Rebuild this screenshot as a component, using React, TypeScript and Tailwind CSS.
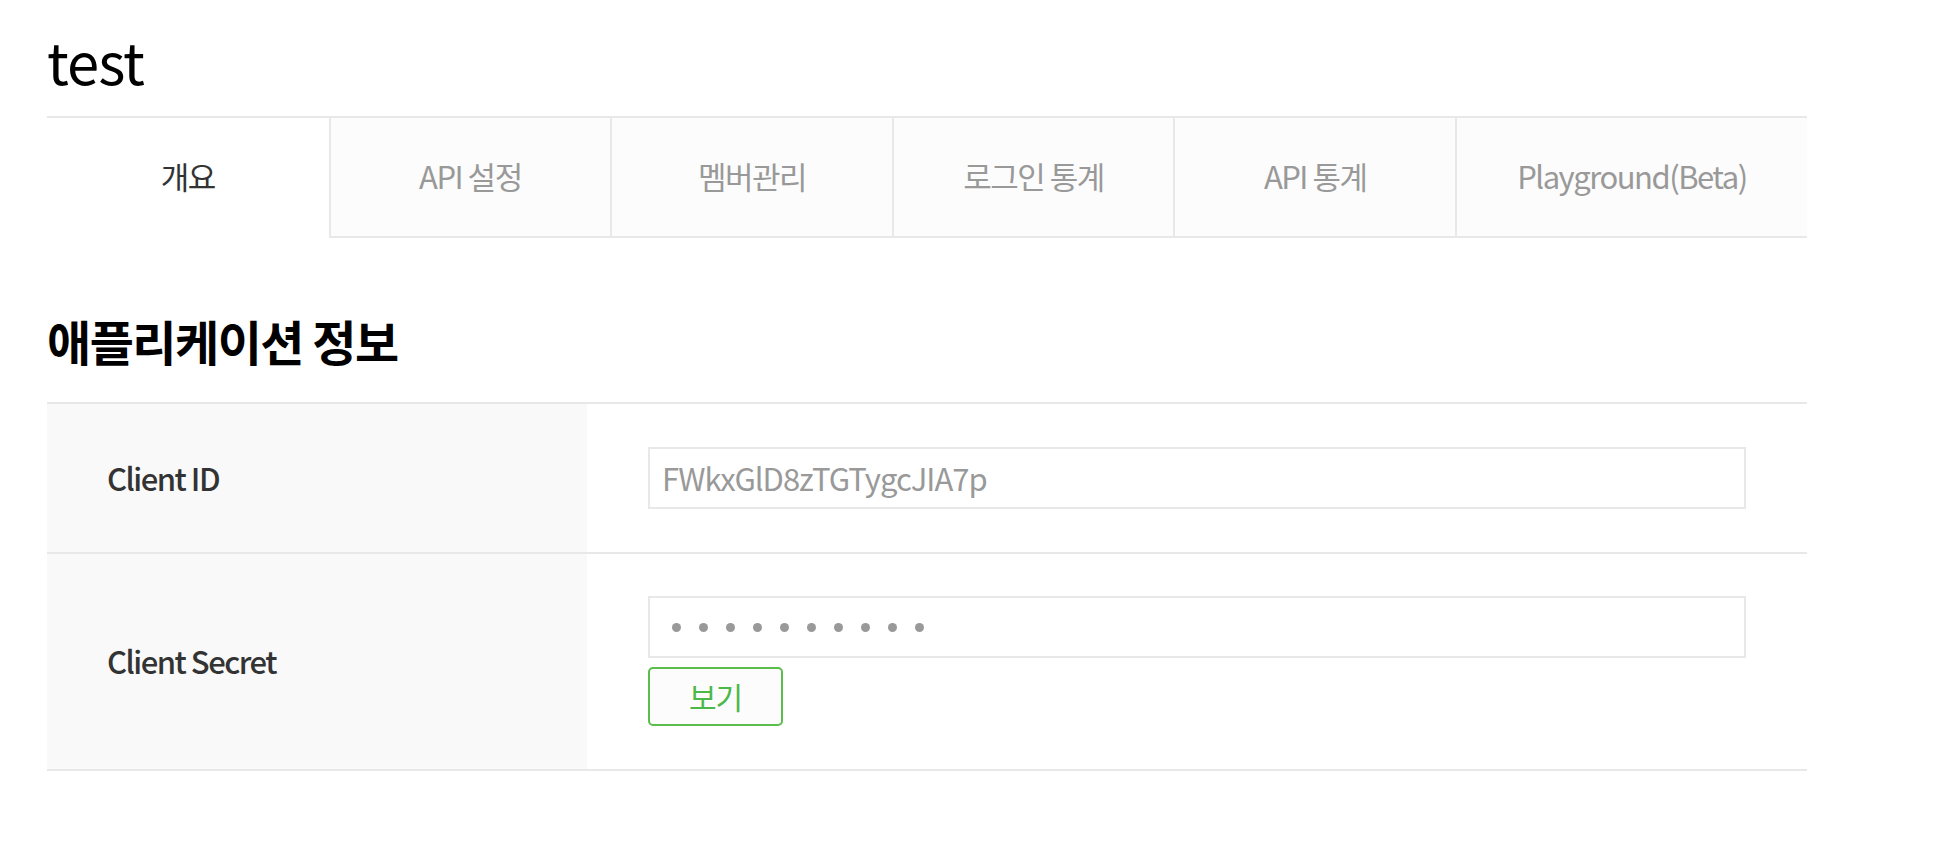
import React from 'react'

const tabs = ['개요', 'API 설정', '멤버관리', '로그인 통계', 'API 통계', 'Playground(Beta)']

export default function App() {
  return (
    <div
      className="min-h-screen bg-white pl-[47px] pt-[27px]"
      style={{ fontFamily: '"Noto Sans CJK KR", "Noto Sans", sans-serif' }}
    >
      <div className="w-[1760px]">
        <h1 className="text-[58px] leading-[66px] tracking-[-1px] text-black">test</h1>

        <div className="mt-[23px] flex h-[122px] border-t-2 border-[#e8e8e8]">
          {tabs.map((tab, i) => (
            <div
              key={tab}
              className={
                i === 0
                  ? 'flex w-[16%] items-center justify-center bg-white pb-[4px] text-[31px] tracking-[-1.5px] text-[#333]'
                  : i === tabs.length - 1
                    ? 'flex flex-1 items-center justify-center border-b-2 border-l-2 border-[#e8e8e8] bg-[#fcfcfc] pb-[2px] text-[31px] tracking-[-1.5px] text-[#999]'
                    : 'flex w-[16%] items-center justify-center border-b-2 border-l-2 border-[#e8e8e8] bg-[#fcfcfc] pb-[2px] text-[31px] tracking-[-1.5px] text-[#999]'
              }
            >
              {tab}
            </div>
          ))}
        </div>

        <h2 className="mt-[72px] text-[48px] font-bold leading-[60px] tracking-[-1.5px] text-black">
          애플리케이션 정보
        </h2>

        <div className="mt-[32px] border-t-2 border-[#e8e8e8]">
          <div className="flex border-b-2 border-[#e8e8e8]">
            <div className="flex w-[540px] items-center bg-[#f9f9f9] pl-[60px] text-[31px] font-medium tracking-[-1.5px] text-[#333]">
              Client ID
            </div>
            <div className="flex-1 px-[61px] py-[43px]">
              <div className="flex h-[62px] items-center border-2 border-[#e8e8e8] px-[12px] text-[31px] tracking-[-1px] text-[#999]">
                FWkxGlD8zTGTygcJIA7p
              </div>
            </div>
          </div>
          <div className="flex border-b-2 border-[#e8e8e8]">
            <div className="flex w-[540px] items-center bg-[#f9f9f9] pl-[60px] text-[31px] font-medium tracking-[-1.5px] text-[#333]">
              Client Secret
            </div>
            <div className="flex-1 px-[61px] pt-[42px] pb-[43px]">
              <div className="flex h-[62px] items-center gap-[18px] border-2 border-[#e8e8e8] px-[22px]">
                {Array.from({ length: 10 }).map((_, i) => (
                  <span key={i} className="h-[9px] w-[9px] rounded-full bg-[#999]" />
                ))}
              </div>
              <button className="mt-[9px] flex h-[59px] w-[135px] items-center justify-center rounded-[5px] border-2 border-[#5bbd4b] bg-[#fcfcfc] text-[30px] tracking-[-1px] text-[#4cb848]">
                보기
              </button>
            </div>
          </div>
        </div>
      </div>
    </div>
  )
}
